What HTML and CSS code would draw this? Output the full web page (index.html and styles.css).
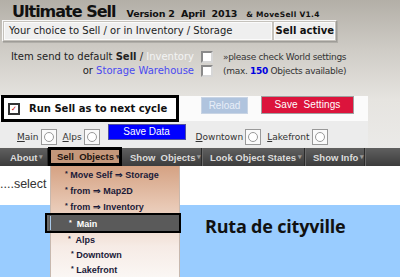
FILE: index.html
```html
<!DOCTYPE html>
<html>
<head>
<meta charset="utf-8">
<link rel="stylesheet" href="styles.css">
</head>
<body>
<div class="page">
  <div class="top">
    <div class="title-line">
      <span class="title">Ultimate Sell</span>
      <span class="version">Version 2&nbsp; April&nbsp; 2013</span>
      <span class="move">&amp; MoveSell V1.4</span>
    </div>
    <div class="choice">
      <div class="choice-text">Your choice to Sell / or in Inventory / Storage</div>
      <div class="choice-state">Sell active</div>
    </div>
    <div class="opts">
      <div class="opt-row">
        <div class="opt-label">Item send to default <b>Sell</b> / <span class="inv">Inventory</span></div>
        <span class="cb"></span>
        <div class="opt-note">»please check World settings</div>
      </div>
      <div class="opt-row">
        <div class="opt-label">or <span class="store">Storage Warehouse</span></div>
        <span class="cb"></span>
        <div class="opt-note">(max. <b class="num">150</b> Objects available)</div>
      </div>
    </div>
    <div class="panel">
      <div class="run-row">
        <div class="run-box"><span class="cb checked">✓</span><span class="run-text">Run Sell as to next cycle</span></div>
        <div class="btn reload">Reload</div>
        <div class="btn save-set">Save&nbsp; Settings</div>
      </div>
      <div class="world-row">
        <span class="wl"><u>M</u>ain</span><span class="radio"><i></i></span>
        <span class="wl"><u>A</u>lps</span><span class="radio"><i></i></span>
        <div class="btn save-data">Save Data</div>
        <span class="wl"><u>D</u>owntown</span><span class="radio"><i></i></span>
        <span class="wl"><u>L</u>akefront</span><span class="radio"><i></i></span>
      </div>
    </div>
  </div>
  <div class="nav">
    <div class="nav-item about">About <span class="arr">▾</span></div>
    <div class="nav-item active">Sell&nbsp; Objects <span class="arr">▾</span>
      <div class="menu">
        <div class="mi"><span class="st">*</span> Move Self ⇒ Storage</div>
        <div class="mi"><span class="st">*</span> from ⇒ Map2D</div>
        <div class="mi"><span class="st">*</span> from ⇒ Inventory</div>
        <div class="mi sub hl"><span class="st">*</span>&nbsp; Main</div>
        <div class="mi sub"><span class="st">*</span>&nbsp; Alps</div>
        <div class="mi sub2"><span class="st">*</span> Downtown</div>
        <div class="mi sub2"><span class="st">*</span> Lakefront</div>
      </div>
    </div>
    <div class="nav-item show">Show&nbsp; Objects <span class="arr">▾</span></div>
    <div class="nav-item look">Look Object States <span class="arr">▾</span></div>
    <div class="nav-item info">Show Info <span class="arr">▾</span></div>
  </div>
  <div class="content">
    <div class="select">....select</div>
    <div class="blue"><div class="ruta">Ruta de cityville</div></div>
  </div>
</div>
</body>
</html>
```
FILE: styles.css
```css
html, body { margin: 0; padding: 0; }
body { width: 400px; height: 277px; overflow: hidden; background: #fff; font-family: "DejaVu Sans", Verdana, sans-serif; }
.page { position: relative; width: 400px; height: 277px; overflow: hidden; }
.top { background: linear-gradient(#b3afa7 0px, #cfccc6 50px, #e6e4e0 100px, #ebeae8 148px); height: 148px; display: flex; flex-direction: column; }
.title-line { padding: 2px 0 0 12px; height: 18px; display: flex; align-items: baseline; white-space: nowrap; color: #111; }
.title { font-size: 16px; font-weight: bold; letter-spacing: -1px; }
.version { font-size: 9.5px; font-weight: bold; margin-left: 11px; letter-spacing: -0.2px; }
.move { font-size: 7.5px; font-weight: bold; margin-left: 9px; letter-spacing: 0.3px; }
.choice { margin: 0 0 0 2px; width: 331px; height: 18px; display: flex; gap: 2px; padding: 1px; border: 1px solid; border-color: #f8f8f8 #9e9c97 #9e9c97 #f8f8f8; background: #c5c2bc; box-shadow: 1px 1px 0 #b0aea8; }
.choice-text, .choice-state { background: #efefef; border: 1px solid #fbfbfb; font-size: 10px; line-height: 16px; color: #222; white-space: nowrap; }
.choice-text { width: 277px; padding-left: 4px; }
.choice-state { flex: 1; text-align: center; font-weight: bold; color: #111; }
.opts { margin-top: 8px; display: flex; flex-direction: column; gap: 1px; }
.opt-row { display: flex; align-items: center; height: 13px; }
.opt-label { width: 194px; text-align: right; font-size: 10px; color: #222; white-space: nowrap; }
.opt-note { font-size: 9px; color: #333; white-space: nowrap; margin-left: 10px; letter-spacing: -0.3px; }
.inv { color: #f4f4f4; }
.store { color: #4a4af0; }
.num { color: #0000e0; }
.cb { display: inline-block; box-sizing: border-box; width: 12px; height: 12px; border: 2px solid; border-color: #8a8a8a #d6d6d6 #d6d6d6 #8a8a8a; background: #fff; margin-left: 7px; }
.cb.checked { width: 12px; height: 12px; margin: 0; border: 2px solid #333; font-size: 7px; line-height: 8px; text-align: center; color: #c00; }
.panel { margin-top: 19px; width: 368px; display: flex; flex-direction: column; }
.run-row { height: 25px; background: #fbfbfb; display: flex; align-items: flex-start; position: relative; }
.run-box { box-sizing: border-box; width: 178px; height: 27px; margin: -1px 0 0 1px; border: 3px solid #000; background: #fff; display: flex; align-items: center; padding-left: 4px; gap: 9px; position: relative; z-index: 1; }
.run-text { font-size: 10px; font-weight: bold; color: #111; white-space: nowrap; }
.btn { font-family: "Liberation Sans", Arial, sans-serif; font-size: 10px; text-align: center; box-sizing: border-box; }
.reload { margin: 1px 0 0 22px; width: 47px; height: 17px; line-height: 15px; background: #b0c4de; color: #e8eef8; border: 1px solid #c8d4e4; }
.save-set { margin: 0 0 0 13px; width: 93px; height: 18px; line-height: 16px; background: #dc143c; color: #fff; border: 1px solid #a0a0a0; letter-spacing: 0.1px; }
.world-row { height: 26px; background: #ececec; display: flex; align-items: flex-start; padding-left: 17px; white-space: nowrap; }
.wl { font-size: 9px; color: #333; line-height: 16px; margin-top: 8px; }
.radio { box-sizing: border-box; width: 16px; height: 16px; border: 1px solid #999; background: #fafafa; display: inline-flex; align-items: center; justify-content: center; margin: 8px 6px 0 2px; }
.radio i { width: 8px; height: 8px; border: 1px solid #999; border-radius: 50%; background: #fff; }
.save-data { width: 78px; height: 16px; line-height: 14px; background: #0000ff; color: #fff; border: 1px solid #5050a0; margin: 3px 10px 0 2px; }
.nav { height: 18px; background: linear-gradient(#606060, #3c3c3c); display: flex; align-items: stretch; font-family: "Liberation Sans", Arial, sans-serif; font-size: 9.5px; font-weight: bold; color: #dcdcdc; white-space: nowrap; position: relative; z-index: 2; }
.nav-item { display: flex; align-items: center; border-right: 1px solid #2a2a2a; box-shadow: 1px 0 0 #6a6a6a; position: relative; }
.arr { font-size: 7px; color: #999; margin-left: 2px; }
.about { padding: 0 0 0 10px; width: 37px; }
.active { box-sizing: border-box; width: 74px; margin-top: -1px; height: 19px; background: #c4977a; border: 3px solid #000; color: #1e1410; padding-left: 6px; box-shadow: none; }
.active .arr { color: #333; }
.show { width: 71px; padding-left: 8px; }
.look { width: 94px; padding-left: 8px; }
.info { width: 51px; padding-left: 8px; }
.menu { position: absolute; left: -1px; top: 16px; width: 130px; height: 120px; background: linear-gradient(#d5a283 0px, #e8c8b4 40px, #f6ebe5 80px, #fbf8f6 115px); border-left: 1px solid #c7b8ae; border-right: 1px solid #c7b8ae; color: #1a1a38; font-size: 9px; padding-top: 0; box-sizing: border-box; }
.mi { height: 16px; line-height: 16px; padding-left: 14px; }
.mi .st { font-size: 7px; vertical-align: 2px; }
.mi.sub { padding-left: 17px; height: 15px; line-height: 15px; }
.mi.sub2 { padding-left: 20px; height: 15px; line-height: 15px; }
.mi.hl { margin: -1px -2px -2px -6px; padding-left: 22px; height: 20px; line-height: 16px; box-sizing: border-box; border: 2px solid #000; background: #5a5a5a; color: #fff; box-shadow: inset 2px 0 0 #6a6a6a; position: relative; }
.mi.hl::before { content: ""; position: absolute; left: 3px; top: 1px; bottom: 1px; width: 1px; background: #a8c8e8; }
.content { height: 111px; display: flex; flex-direction: column; }
.select { height: 39px; font-family: "Liberation Sans", Arial, sans-serif; font-size: 12.5px; color: #333; padding-top: 11px; box-sizing: border-box; }
.blue { flex: 1; background: #99ccff; padding: 10px 0 0 205px; }
.ruta { font-family: "Open Sans", sans-serif; font-weight: bold; font-size: 18px; line-height: 22px; color: #111; letter-spacing: -0.2px; }
```
